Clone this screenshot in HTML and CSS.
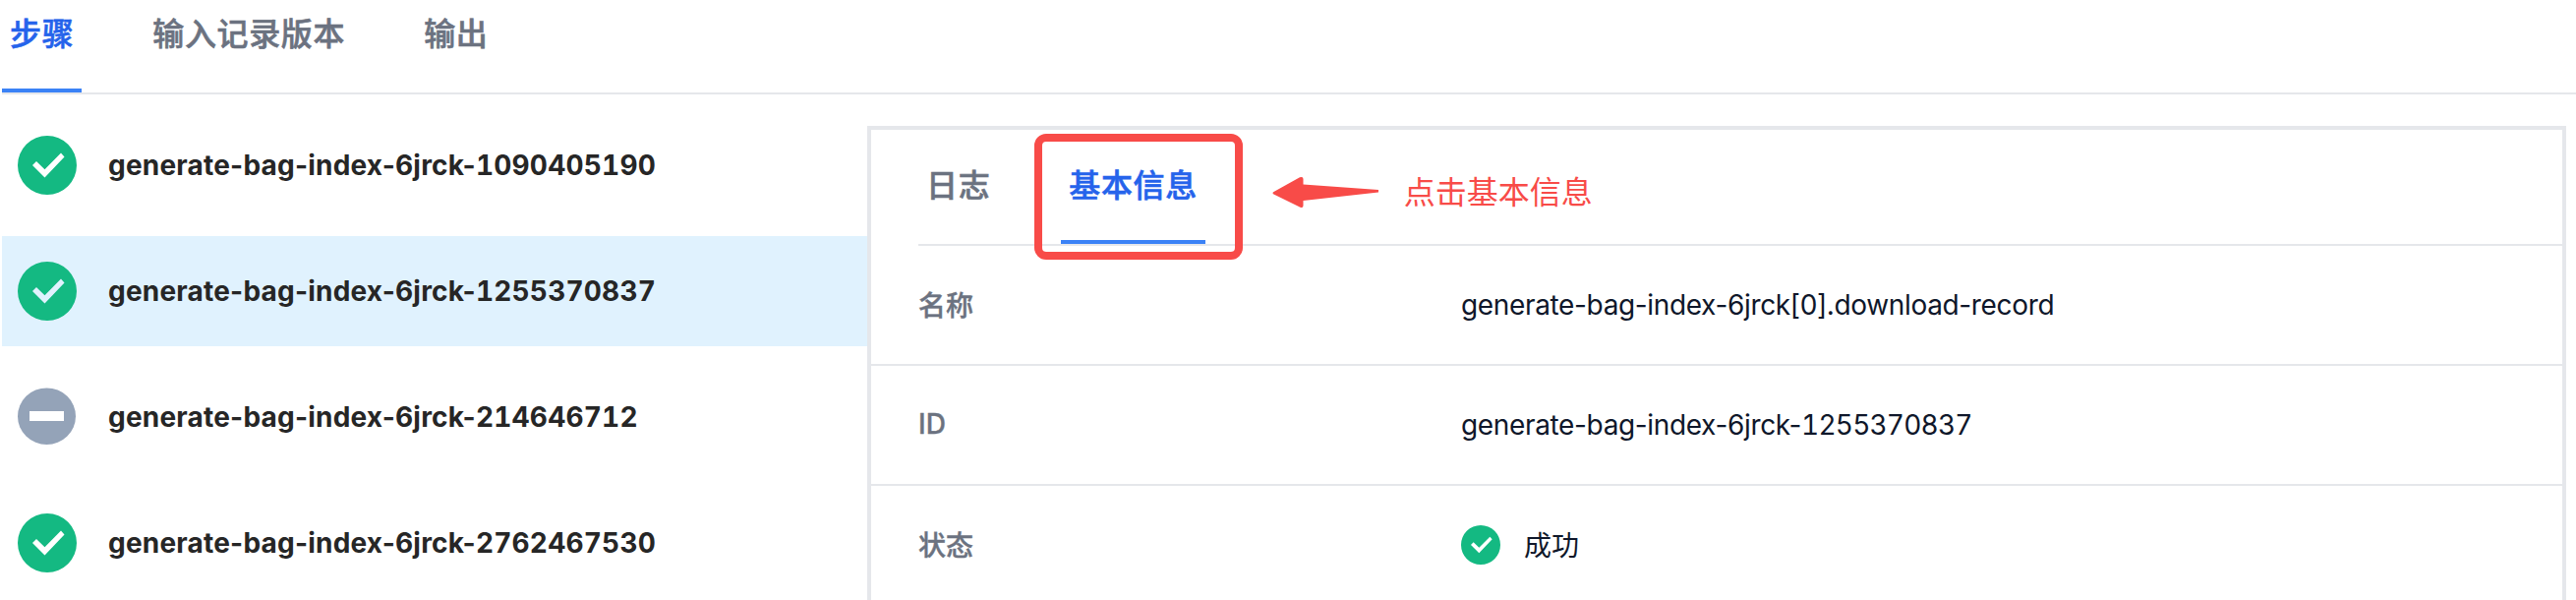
FILE: index.html
```html
<!DOCTYPE html>
<html lang="zh-CN">
<head>
<meta charset="utf-8">
<title>步骤</title>
<link rel="stylesheet" href="styles.css">
</head>
<body>
<div class="page">
<svg class="defs" width="0" height="0">
  <symbol id="check" viewBox="0 0 60 60">
    <path fill="#14b982" fill-rule="evenodd" d="M30 0a30 30 0 1 1 0 60a30 30 0 0 1 0-60ZM44 17.5L27.5 34.3L19 26L15 30L27.5 42.5L47.5 21.5Z"/>
  </symbol>
</svg>
<nav class="tabs">
  <a class="tab active">步骤</a>
  <a class="tab">输入记录版本</a>
  <a class="tab">输出</a>
</nav>
<main class="content">
  <ul class="steps">
    <li class="step"><svg class="icon"><use href="#check"/></svg><span>generate-bag-index-6jrck-<span class="num">1090405190</span></span></li>
    <li class="step selected"><svg class="icon"><use href="#check"/></svg><span>generate-bag-index-6jrck-<span class="num">1255370837</span></span></li>
    <li class="step"><svg class="icon" viewBox="0 0 60 60"><ellipse cx="29.5" cy="29.2" rx="29.5" ry="28.8" fill="#94a3b8"/><path fill="#fff" d="M12 24h35v10H12z"/></svg><span>generate-bag-index-6jrck-<span class="num">214646712</span></span></li>
    <li class="step"><svg class="icon"><use href="#check"/></svg><span>generate-bag-index-6jrck-<span class="num">2762467530</span></span></li>
  </ul>
  <section class="panel">
    <nav class="tabs inner">
      <a class="tab">日志</a>
      <a class="tab active">基本信息<span class="highlight"></span></a>
      <div class="note">
        <svg class="arrow" viewBox="0 0 110 34"><path fill="#f84b48" d="M1.5 16L28 1.3Q31.5 0 31.5 3V8.5L108 14V16.5L31.5 25V30Q31.5 33 28 31.5L1.5 18.5Q-0.5 17 1.5 16Z"/></svg>
        <span>点击基本信息</span>
      </div>
    </nav>
    <dl class="info">
      <div class="row"><dt>名称</dt><dd class="value">generate-bag-index-6jrck[0].download-record</dd></div>
      <div class="row"><dt>ID</dt><dd class="value"><span>generate-bag-index-6jrck-<span class="num">1255370837</span></span></dd></div>
      <div class="row"><dt>状态</dt><dd><svg class="status"><use href="#check"/></svg><span class="state">成功</span></dd></div>
    </dl>
  </section>
</main>
</div>
</body>
</html>
```

FILE: styles.css
```css
* { box-sizing: border-box; }
body {
  margin: 0;
  background: #fff;
  font-family: Inter, "Noto Sans CJK SC", sans-serif;
  font-size: 28px;
}
.page { height: 610px; overflow: hidden; }
.defs { display: block; }
ul, dl, dd { margin: 0; padding: 0; list-style: none; }
.num { font-variant-numeric: tabular-nums; }
.tabs {
  display: flex;
  gap: 64px;
  height: 96px;
  margin-left: 2px;
  border-bottom: 2px solid #e5e7eb;
  font-size: 32px;
  line-height: 48px;
  font-weight: 500;
  letter-spacing: .02em;
}
.tab {
  position: relative;
  padding: 11px 8px 0;
  color: #6b7280;
  border-bottom: 4px solid transparent;
  -webkit-text-stroke: .6px currentColor;
}
.tab.active { color: #2563eb; border-bottom-color: #3b82f6; }
.content { display: flex; height: 514px; padding: 16px 10px 0 2px; }
.steps {
  display: flex;
  flex-direction: column;
  gap: 16px;
  width: 880px;
}
.step {
  display: flex;
  flex-shrink: 0;
  align-items: center;
  gap: 32px;
  height: 112px;
  padding-left: 16px;
  font-weight: 700;
  letter-spacing: .21px;
  color: #262626;
}
.selected { background: #e0f2fe; }
.icon { width: 60px; height: 60px; }
.panel {
  flex: 1;
  margin-top: 16px;
  border: 4px solid #e5e7eb;
  border-bottom: 0;
}
.inner { height: 118px; margin-left: 48px; }
.inner .tab { padding-top: 33px; }
.highlight {
  position: absolute;
  left: -27px;
  top: 4px;
  width: 212px;
  height: 128px;
  border: 8px solid #f84b48;
  border-radius: 12px;
}
.note {
  display: flex;
  align-items: center;
  gap: 24px;
  height: 50px;
  margin: 39px 0 0 4px;
  color: #f84b48;
  font-weight: 400;
  letter-spacing: 0;
}
.arrow { width: 110px; height: 34px; }
.row {
  display: grid;
  grid-template-columns: 552px 1fr;
  align-items: center;
  height: 122px;
  padding-left: 48px;
  border-bottom: 2px solid #e5e7eb;
}
dt {
  padding-bottom: 3px;
  color: #6b7280;
  font-weight: 500;
  -webkit-text-stroke: .4px currentColor;
}
dd { display: flex; align-items: center; gap: 24px; color: #0f172a; }
.value { letter-spacing: -.35px; }
.value .num { letter-spacing: -.8px; }
.status { width: 40px; height: 40px; }
.state { padding-bottom: 3px; }
```
